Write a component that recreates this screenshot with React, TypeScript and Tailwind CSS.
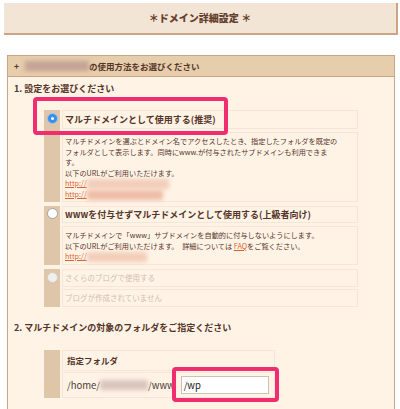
import React from "react";

const Blur = ({ w, tone = "bg-[#f1cdb9]" }: { w: number; tone?: string }) => (
    <span
        className={`inline-block h-[10px] align-middle blur-[2px] ${tone}`}
        style={{ width: w }}
    />
);

const Radio = ({ kind }: { kind: "on" | "off" | "disabled" }) => {
    if (kind === "on") {
        return (
            <span className="flex h-[11px] w-[11px] items-center justify-center rounded-full border border-[#9cc4f0] bg-[#3a8fec]">
                <span className="h-[3px] w-[3px] rounded-full bg-white" />
            </span>
        );
    }
    if (kind === "off") {
        return <span className="block h-[11px] w-[11px] rounded-full border border-[#a4a4a4] bg-white" />;
    }
    return <span className="block h-[11px] w-[11px] rounded-full border border-[#d2cdc8] bg-[#f1efed]" />;
};

const Link = ({ children }: { children: React.ReactNode }) => (
    <span className="text-[#d8632c] underline">{children}</span>
);

export default function App() {
    return (
        <div className="relative h-[409px] w-[400px] overflow-hidden bg-white font-['Noto_Sans_CJK_JP','Noto_Sans',sans-serif] text-[#55352a]">

            {/* page title */}
            <div className="ml-[4px] mt-[3px] flex h-[32px] w-[394px] items-center justify-center border-b-2 border-r-2 border-[#c9a587] bg-[#f3e5d5] pb-[2px] text-[10px] font-black text-[#65402f]">
                ＊ドメイン詳細設定 ＊
            </div>

            {/* panel */}
            <div className="ml-[7px] mt-[20px] w-[388px] border border-[#c7a78b] bg-[#fff3e6]">

                <div className="flex h-[21px] items-center border-b border-[#c9a585] bg-[#e6cdab] pl-[6px] text-[8.5px] font-bold">
                    <span className="mr-[6px]">+</span>
                    <Blur w={64} tone="bg-[#c4a395]" />
                    <span>の使用方法をお選びください</span>
                </div>

                <div className="pl-[6px] pt-[6px] text-[9px] font-bold leading-[12px]">
                    1. 設定をお選びください
                </div>

                {/* options */}
                <div className="ml-[36px] mt-[15px] flex w-[314px] flex-col gap-[4px]">

                    <div className="flex gap-[2px]">
                        <div className="flex w-[16px] justify-center bg-[#dfc6a8] pt-[3px]">
                            <Radio kind="on" />
                        </div>
                        <div className="flex flex-1 flex-col gap-[3px]">
                            <div className="flex h-[19px] items-center border border-[#f5e6da] pl-[2px] text-[9px] font-bold">
                                マルチドメインとして使用する(推奨)
                            </div>
                            <div className="h-[70px] whitespace-nowrap border border-[#f5e6da] pl-[2px] pt-[3px] text-[7.2px] leading-[10.5px]">
                                <div>マルチドメインを選ぶとドメイン名でアクセスしたとき、指定したフォルダを既定の</div>
                                <div>フォルダとして表示します。同時にwww.が付与されたサブドメインも利用できま</div>
                                <div>す。</div>
                                <div>以下のURLがご利用いただけます。</div>
                                <div><Link>http://</Link><Blur w={82} /></div>
                                <div><Link>http://</Link><Blur w={76} tone="bg-[#eebda6]" /></div>
                            </div>
                        </div>
                    </div>

                    <div className="flex gap-[2px]">
                        <div className="flex w-[16px] justify-center bg-[#dfc6a8] pt-[2px]">
                            <Radio kind="off" />
                        </div>
                        <div className="flex flex-1 flex-col gap-[3px]">
                            <div className="flex h-[17px] items-center border border-[#f5e6da] pl-[2px] text-[9px] font-bold">
                                wwwを付与せずマルチドメインとして使用する(上級者向け)
                            </div>
                            <div className="h-[39px] whitespace-nowrap border border-[#f5e6da] pl-[2px] pt-[3px] text-[7.2px] leading-[10.5px]">
                                <div>マルチドメインで「www」サブドメインを自動的に付与しないようにします。</div>
                                <div>以下のURLがご利用いただけます。　詳細については <Link>FAQ</Link>をご覧ください。</div>
                                <div><Link>http://</Link><Blur w={60} /></div>
                            </div>
                        </div>
                    </div>

                    <div className="flex gap-[2px]">
                        <div className="flex w-[16px] justify-center bg-[#dfc6a8] pt-[3px]">
                            <Radio kind="disabled" />
                        </div>
                        <div className="flex flex-1 flex-col gap-[2px] text-[#cdbfb2]">
                            <div className="flex h-[18px] items-center border border-[#f5e6da] pl-[2px] text-[7.5px]">
                                さくらのブログで使用する
                            </div>
                            <div className="flex h-[18px] items-center border border-[#f5e6da] pl-[2px] text-[7.5px]">
                                ブログが作成されていません
                            </div>
                        </div>
                    </div>
                </div>

                <div className="pl-[6px] pt-[15px] text-[9px] font-bold leading-[12px]">
                    2. マルチドメインの対象のフォルダをご指定ください
                </div>

                {/* folder */}
                <div className="mb-[20px] ml-[36px] mt-[16px] flex w-[231px] gap-[2px]">
                    <div className="w-[16px] bg-[#dfc6a8]" />
                    <div className="flex flex-1 flex-col gap-[1px]">
                        <div className="flex h-[21px] items-center border border-[#f5e6da] pl-[4px] text-[8.5px] font-bold">
                            指定フォルダ
                        </div>
                        <div className="flex h-[26px] items-center whitespace-nowrap border border-[#f5e6da] pl-[4px] text-[9.5px] text-[#4a3a34]">
                            <span>/home/</span>
                            <Blur w={48} tone="bg-[#d9c4bb]" />
                            <span>/www</span>
                            <div className="ml-[6px] flex h-[18px] w-[88px] items-center border border-[#c9c2bc] bg-white pl-[2px] text-[9.5px] text-[#222]">
                                /wp
                            </div>
                        </div>
                    </div>
                </div>
            </div>

            {/* highlight boxes */}
            <div className="absolute left-[33px] top-[97px] h-[38px] w-[195px] rounded-[4px] border-4 border-[#ef2d6f]" />
            <div className="absolute left-[172px] top-[367px] h-[35px] w-[107px] rounded-[4px] border-4 border-[#ef2d6f]" />
        </div>
    );
}
